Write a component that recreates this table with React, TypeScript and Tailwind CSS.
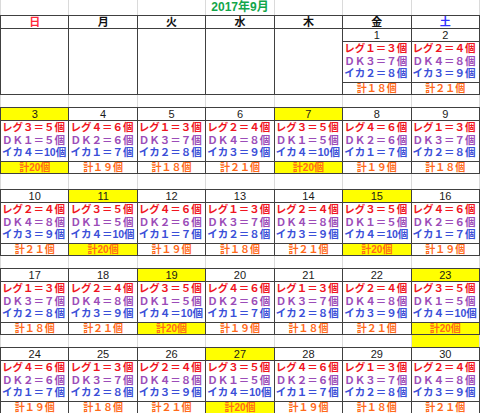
import React from "react";

const FW = "０１２３４５６７８９";
const fw = (n: number) => (n >= 10 ? String(n) : FW[n]);

type P = { l: [number, number]; d: [number, number]; i: [number, number]; t: string; y: boolean };

const patterns: P[] = [
  { l: [1, 3], d: [3, 7], i: [2, 8], t: "計１８個", y: false },
  { l: [2, 4], d: [4, 8], i: [3, 9], t: "計２１個", y: false },
  { l: [3, 5], d: [1, 5], i: [4, 10], t: "計20個", y: true },
  { l: [4, 6], d: [2, 6], i: [1, 7], t: "計１９個", y: false },
];

const weeks: (number | null)[][] = [
  [null, null, null, null, null, 1, 2],
  [3, 4, 5, 6, 7, 8, 9],
  [10, 11, 12, 13, 14, 15, 16],
  [17, 18, 19, 20, 21, 22, 23],
  [24, 25, 26, 27, 28, 29, 30],
];

const gapHeights = ["h-[12px]", "h-[15px]", "h-[12px]", "h-[12px]"];

function DayCell({ day }: { day: number | null }) {
  if (day === null) return <div className="border-r border-b border-[#404040]" />;
  const p = patterns[(day - 1) % 4];
  return (
    <div className="flex flex-col border-r border-b border-[#404040] min-w-0">
      <div
        className={`h-[13px] border-b border-[#404040] text-center text-[11px] leading-[12px] text-[#1a1a1a] ${
          p.y ? "bg-[#ffff00]" : ""
        }`}
      >
        {day}
      </div>
      <div className="h-[41px] border-b border-[#404040] pl-[1px] text-[10.5px] leading-[12.7px] font-bold whitespace-nowrap overflow-hidden">
        <div className="text-[#f0141e]">
          レグ{fw(p.l[0])}＝{fw(p.l[1])}個
        </div>
        <div className="text-[#9b4cb8]">
          ＤＫ{fw(p.d[0])}＝{fw(p.d[1])}個
        </div>
        <div className="text-[#3b4fd8]">
          イカ{fw(p.i[0])}＝{fw(p.i[1])}個
        </div>
      </div>
      <div
        className={`flex-1 text-center text-[10px] leading-[11px] font-bold text-[#ff6a1a] whitespace-nowrap ${
          p.y ? "bg-[#ffff00]" : ""
        }`}
      >
        {p.t}
      </div>
    </div>
  );
}

function GapRow({ h, yellowLast }: { h: string; yellowLast?: boolean }) {
  return (
    <div className={`grid grid-cols-7 border-l border-[#dadada] ${h}`}>
      {[0, 1, 2, 3, 4, 5, 6].map((c) => (
        <div
          key={c}
          className={`border-r border-[#dadada] ${yellowLast && c === 6 ? "bg-[#ffff00]" : ""}`}
        />
      ))}
    </div>
  );
}

const dows = [
  { t: "日", c: "text-[#ff2a3a]" },
  { t: "月", c: "text-[#111111]" },
  { t: "火", c: "text-[#111111]" },
  { t: "水", c: "text-[#111111]" },
  { t: "木", c: "text-[#111111]" },
  { t: "金", c: "text-[#111111]" },
  { t: "土", c: "text-[#3333ff]" },
];

export default function App() {
  return (
    <div className="w-[480px] h-[413px] overflow-hidden bg-white font-['Liberation_Sans','Noto_Sans_CJK_JP',sans-serif]">
      <div className="grid grid-cols-7 h-[15px] border-l border-[#dadada]">
        {[0, 1, 2, 3, 4, 5, 6].map((c) => (
          <div
            key={c}
            className="border-r border-[#dadada] text-center text-[12px] leading-[15px] font-bold text-[#12a64a] whitespace-nowrap"
          >
            {c === 3 ? "2017年9月" : ""}
          </div>
        ))}
      </div>
      <div className="grid grid-cols-7 h-[13px] border-t border-l border-[#404040]">
        {dows.map((d) => (
          <div
            key={d.t}
            className={`border-r border-[#404040] text-center text-[11px] leading-[12px] font-bold ${d.c}`}
          >
            {d.t}
          </div>
        ))}
      </div>
      {weeks.map((w, wi) => (
        <React.Fragment key={wi}>
          <div className="grid grid-cols-7 h-[67px] border-t border-l border-[#404040]">
            {w.map((d, di) => (
              <DayCell key={di} day={d} />
            ))}
          </div>
          {wi < 4 && <GapRow h={gapHeights[wi]} yellowLast={wi === 3} />}
        </React.Fragment>
      ))}
    </div>
  );
}
